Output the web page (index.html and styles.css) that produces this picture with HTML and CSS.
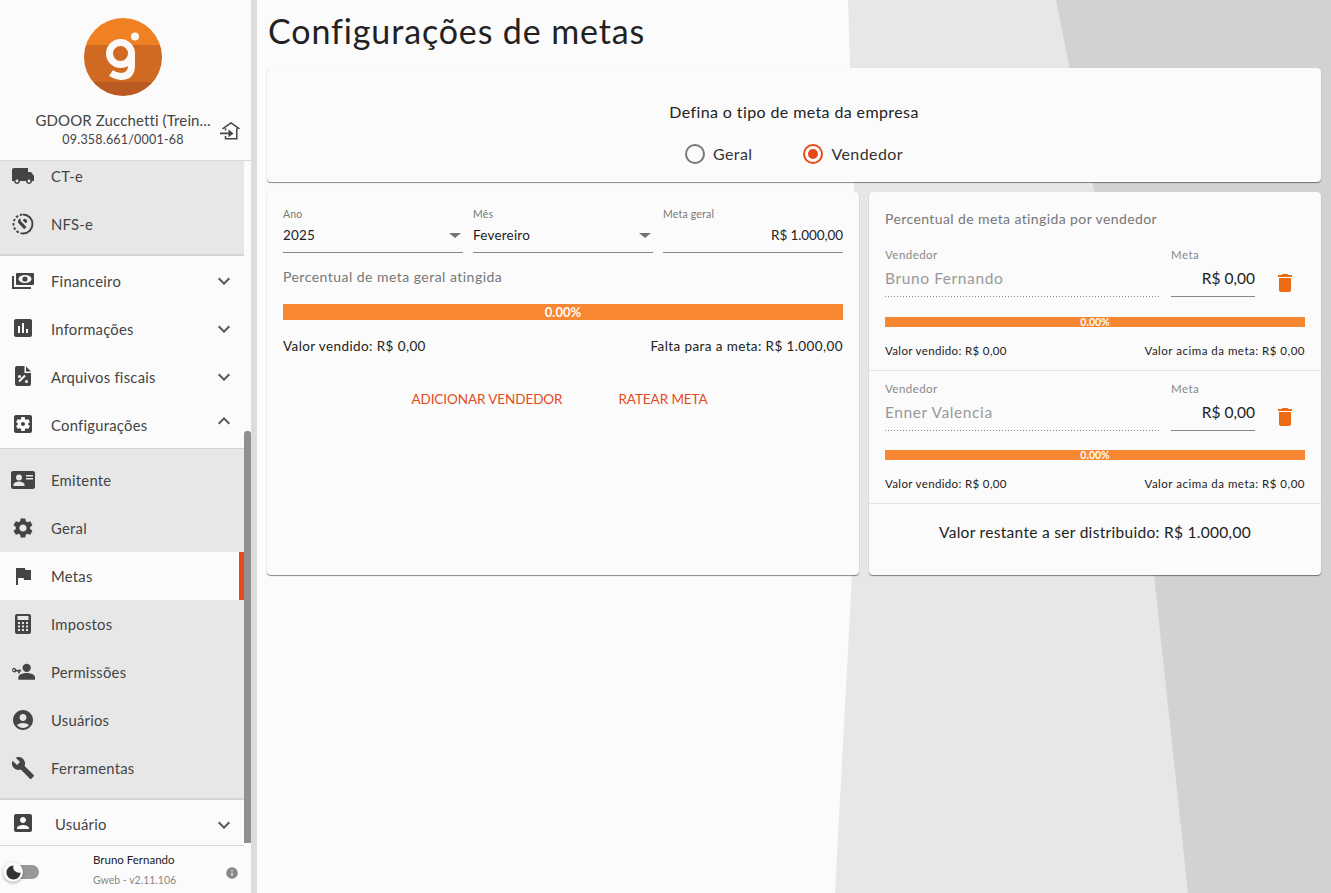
FILE: index.html
```html
<!DOCTYPE html>
<html lang="pt-BR">
<head>
<meta charset="utf-8">
<title>Configurações de metas</title>
<link rel="stylesheet" href="styles.css">
</head>
<body>
<svg class="bg" viewBox="0 0 1331 893" preserveAspectRatio="none" aria-hidden="true">
  <polygon points="848,0 1331,0 1331,893 835,893 852,575 854,190" fill="#e7e7e7"/>
  <polygon points="1056,0 1331,0 1331,893 1188,893 1154,575 1094,190" fill="#d2d2d2"/>
</svg>
<div class="app">
  <aside class="sidebar">
    <div class="brand">
      <svg class="logo" viewBox="0 0 78 78">
        <defs><clipPath id="lc"><circle cx="39" cy="39" r="39"/></clipPath></defs>
        <g clip-path="url(#lc)">
          <rect width="78" height="27" fill="#ef8023"/>
          <rect y="27" width="78" height="37" fill="#d06a22"/>
          <rect y="64" width="78" height="14" fill="#b95a22"/>
        </g>
        <circle cx="36.500" cy="35.500" r="11" fill="none" stroke="#fbf8f5" stroke-width="7"/>
        <circle cx="51" cy="18.600" r="4" fill="#fbf8f5"/>
        <path d="M47.500 36 V47 Q47.500 58.500 37 58.500 Q32 58.500 27 55" fill="none" stroke="#fbf8f5" stroke-width="7"/>
      </svg>
      <div class="brand-row">
        <div class="brand-text">
          <div class="brand-name">GDOOR Zucchetti (Trein...</div>
          <div class="brand-doc">09.358.661/0001-68</div>
        </div>
        <svg class="swap" viewBox="0 0 20 18"><path d="M2.500 6.800 11 1l8.500 5.800M5.500 6.200V8.500M5.500 14V16.800H16.800V6.200" fill="none" stroke="#444" stroke-width="1.500"/><path d="M0 10.600h8.500V7.600L13.500 11.400 8.500 15.200V12.200H0z" fill="#444"/></svg>
      </div>
    </div>
    <div class="nav-wrap">
      <nav class="nav">
        <div class="sub sub-top">
          <a class="item item-cut"><svg class="ic" viewBox="0 0 24 24"><path d="M20 8h-3V4H3c-1.100 0-2 .9-2 2v11h2c0 1.660 1.340 3 3 3s3-1.340 3-3h6c0 1.660 1.340 3 3 3s3-1.340 3-3h2v-5zM6 18.500c-.83 0-1.500-.67-1.500-1.500s.67-1.500 1.500-1.500 1.500.67 1.500 1.500-.67 1.500-1.500 1.500zm12 0c-.83 0-1.500-.67-1.500-1.500s.67-1.500 1.500-1.500 1.500.67 1.500 1.500-.67 1.500-1.500 1.500z"/></svg><span>CT-e</span></a>
          <a class="item"><svg class="ic" viewBox="0 0 24 24"><path d="M12 2.500a9.500 9.500 0 0 1 0 19" fill="none" stroke="#444" stroke-width="1.900"/><path d="M12 21.500a9.500 9.500 0 0 1 0-19" fill="none" stroke="#444" stroke-width="1.900" stroke-dasharray="2.600 1.800"/><path d="M9.200 6.500a3.500 3.500 0 0 0-1.900 4.600l5.900 6.100 2.300-2.200-5.800-6a3 3 0 0 0-.5-2.500z M13.200 6.800l-1.500 1.500 3 3 1.500-1.500a3.200 3.200 0 0 0-3-3z"/></svg><span>NFS-e</span></a>
        </div>
        <a class="item"><svg class="ic" viewBox="0 0 24 24"><rect x="5" y="5" width="18" height="12" rx="1"/><ellipse cx="14" cy="11" rx="6.500" ry="4" fill="#fbfbfb"/><circle cx="14" cy="11" r="2.600"/><path d="M1 8h2v11h17v2H1z"/></svg><span>Financeiro</span><svg class="chev" viewBox="0 0 24 24"><path d="M7.400 8.600 12 13.200l4.600-4.600L18 10l-6 6-6-6z"/></svg></a>
        <a class="item"><svg class="ic" viewBox="0 0 24 24"><path d="M19 3H5c-1.100 0-2 .9-2 2v14c0 1.100.9 2 2 2h14c1.100 0 2-.9 2-2V5c0-1.100-.9-2-2-2zM9 17H7v-7h2v7zm4 0h-2V7h2v10zm4 0h-2v-4h2v4z"/></svg><span>Informações</span><svg class="chev" viewBox="0 0 24 24"><path d="M7.400 8.600 12 13.200l4.600-4.600L18 10l-6 6-6-6z"/></svg></a>
        <a class="item"><svg class="ic" viewBox="0 0 24 24"><path fill-rule="evenodd" d="M13.500 2H6c-1.100 0-2 .9-2 2v16c0 1.100.9 2 2 2h12c1.100 0 2-.9 2-2V9h-6.500zm-.2 8.800 1.400 1.400-6 6-1.400-1.400zM8.500 11a1.500 1.500 0 1 1 0 3 1.500 1.500 0 0 1 0-3zm7 5a1.500 1.500 0 1 1 0 3 1.500 1.500 0 0 1 0-3z"/><path d="M15 2.500 20 7.500h-5z"/></svg><span>Arquivos fiscais</span><svg class="chev" viewBox="0 0 24 24"><path d="M7.400 8.600 12 13.200l4.600-4.600L18 10l-6 6-6-6z"/></svg></a>
        <a class="item"><svg class="ic" viewBox="0 0 24 24"><path fill-rule="evenodd" d="M19 3H5c-1.100 0-2 .9-2 2v14c0 1.100.9 2 2 2h14c1.100 0 2-.9 2-2V5c0-1.100-.9-2-2-2zm-1.750 9c0 .23-.02.46-.05.68l1.480 1.160c.13.110.17.300.08.450l-1.400 2.420c-.09.150-.27.210-.43.150l-1.740-.7c-.36.280-.76.510-1.180.690l-.26 1.850c-.03.170-.18.300-.35.300h-2.800c-.17 0-.32-.13-.35-.29l-.26-1.850c-.43-.18-.82-.41-1.180-.69l-1.740.7c-.16.060-.34 0-.43-.15l-1.400-2.420c-.09-.15-.05-.34.080-.45l1.480-1.160c-.03-.23-.05-.46-.05-.69 0-.23.02-.46.05-.68l-1.480-1.160c-.13-.110-.17-.300-.08-.450l1.400-2.420c.09-.15.27-.21.430-.15l1.740.7c.36-.28.76-.51 1.180-.69l.26-1.850c.03-.17.180-.300.350-.300h2.800c.17 0 .32.130.35.290l.26 1.850c.43.180.82.410 1.180.690l1.740-.7c.16-.06.34 0 .43.150l1.400 2.420c.09.150.05.340-.08.450l-1.480 1.160c.03.230.05.460.05.690zM12 10a2 2 0 1 0 0 4 2 2 0 0 0 0-4z"/></svg><span>Configurações</span><svg class="chev chev-up" viewBox="0 0 24 24"><path d="M7.400 15.400 12 10.800l4.600 4.600L18 14l-6-6-6 6z"/></svg></a>
        <div class="sub">
          <a class="item"><svg class="ic ic-wide" viewBox="0 0 24 18"><path fill-rule="evenodd" d="M22 0H2C.9 0 0 .9 0 2v14c0 1.100.9 2 2 2h20c1.100 0 2-.9 2-2V2c0-1.100-.9-2-2-2zM8 3.500a3 3 0 1 1 0 6 3 3 0 0 1 0-6zM2.500 15v-1.500c0-2 3.700-3 5.500-3s5.500 1 5.500 3V15zM15 4h7v1.500h-7zm0 3h7v1.500h-7z"/></svg><span>Emitente</span></a>
          <a class="item"><svg class="ic" viewBox="0 0 24 24"><path d="M19.140 12.940c.04-.3.060-.61.060-.94 0-.32-.02-.64-.07-.94l2.030-1.580c.18-.14.230-.41.120-.61l-1.920-3.320c-.12-.22-.37-.29-.59-.22l-2.390.96c-.5-.38-1.030-.7-1.620-.94l-.36-2.540c-.04-.24-.24-.41-.48-.41h-3.840c-.24 0-.43.170-.47.410l-.36 2.540c-.59.240-1.130.570-1.620.94l-2.390-.96c-.22-.08-.47 0-.59.220L2.740 8.870c-.12.210-.08.470.12.610l2.030 1.580c-.05.300-.09.630-.09.940s.02.640.07.940l-2.030 1.580c-.18.140-.23.410-.12.610l1.920 3.320c.12.220.37.290.59.220l2.390-.96c.5.380 1.030.7 1.620.94l.36 2.540c.05.240.24.410.48.410h3.840c.24 0 .44-.17.470-.41l.36-2.540c.59-.24 1.130-.56 1.620-.94l2.390.96c.22.080.47 0 .59-.22l1.920-3.320c.12-.22.070-.47-.12-.61l-2.010-1.580zM12 15.600c-1.980 0-3.600-1.620-3.600-3.600s1.620-3.600 3.600-3.600 3.600 1.620 3.600 3.600-1.620 3.600-3.600 3.600z"/></svg><span>Geral</span></a>
          <a class="item item-active"><svg class="ic" viewBox="0 0 24 24"><path d="M14.400 6 14 4H5v17h2v-7h5.600l.4 2h7V6z"/></svg><span>Metas</span></a>
          <a class="item"><svg class="ic" viewBox="0 0 24 24"><path fill-rule="evenodd" d="M18 2H6c-.9 0-2 .9-2 2v16c0 1.100 1.100 2 2 2h12c.9 0 2-.9 2-2V4c0-1.100-1.100-2-2-2zM6.500 4h11v4h-11zM7 10h2v2H7zm4 0h2v2h-2zm4 0h2v2h-2zM7 13.500h2v2H7zm4 0h2v2h-2zm4 0h2v2h-2zM7 17h2v2H7zm4 0h2v2h-2zm4 0h2v2h-2z"/></svg><span>Impostos</span></a>
          <a class="item"><svg class="ic ic-wide" viewBox="0 0 26 18"><circle cx="17" cy="4.500" r="4.500"/><path d="M8 16.500v-2c0-3 6-4.500 9-4.500s9 1.500 9 4.500v3H8z"/><path fill-rule="evenodd" d="M3.200 4.500A2.500 2.500 0 0 1 5.600 6.500H11V8.500H9.500V10.500H7.800V8.500H5.600A2.500 2.500 0 1 1 3.200 4.500zm0 1.500a1 1 0 1 0 0 2 1 1 0 0 0 0-2z"/></svg><span>Permissões</span></a>
          <a class="item"><svg class="ic" viewBox="0 0 24 24"><path d="M12 2C6.480 2 2 6.480 2 12s4.480 10 10 10 10-4.480 10-10S17.520 2 12 2zm0 4c1.930 0 3.500 1.570 3.500 3.500S13.930 13 12 13s-3.500-1.570-3.500-3.500S10.070 6 12 6zm0 14c-2.030 0-4.430-.82-6.140-2.880C7.550 15.800 9.680 15 12 15s4.450.8 6.140 2.120C16.430 19.180 14.030 20 12 20z"/></svg><span>Usuários</span></a>
          <a class="item"><svg class="ic" viewBox="0 0 24 24"><path d="M22.700 19l-9.100-9.100c.9-2.300.4-5-1.500-6.900-2-2-5-2.400-7.400-1.300L9 6 6 9 1.600 4.700C.4 7.100.9 10.100 2.900 12.100c1.900 1.900 4.600 2.400 6.900 1.500l9.100 9.100c.4.400 1 .4 1.400 0l2.300-2.300c.5-.4.500-1.100.1-1.400z"/></svg><span>Ferramentas</span></a>
        </div>
        <a class="item item-user"><svg class="ic" viewBox="0 0 24 24"><path d="M3 5v14c0 1.100.9 2 2 2h14c1.100 0 2-.9 2-2V5c0-1.100-.9-2-2-2H5c-1.100 0-2 .9-2 2zm12 4c0 1.660-1.340 3-3 3s-3-1.340-3-3 1.340-3 3-3 3 1.340 3 3zm-9 8c0-2 4-3.100 6-3.100s6 1.100 6 3.100v1H6v-1z"/></svg><span>Usuário</span><svg class="chev" viewBox="0 0 24 24"><path d="M7.400 8.600 12 13.200l4.600-4.600L18 10l-6 6-6-6z"/></svg></a>
      </nav>
      <div class="scrollbar"><div class="thumb"></div></div>
    </div>
    <div class="foot">
      <div class="toggle"><div class="track"></div><div class="knob"><svg viewBox="0 0 24 24"><path d="M12 2a10 10 0 1 0 10 10 8 8 0 0 1-10-10z" fill="#333"/></svg></div></div>
      <div class="foot-text">
        <div class="foot-name">Bruno Fernando</div>
        <div class="foot-ver">Gweb - v2.11.106</div>
      </div>
      <svg class="info" viewBox="0 0 24 24"><path d="M12 2a10 10 0 1 0 0 20 10 10 0 0 0 0-20zm1 15h-2v-6h2zm0-8h-2V7h2z" fill="#888"/></svg>
    </div>
  </aside>
  <main class="main">
    <h1 class="title">Configurações de metas</h1>
    <section class="card card-type">
      <div class="type-q">Defina o tipo de meta da empresa</div>
      <div class="radios">
        <label class="radio"><span class="dot"></span>Geral</label>
        <label class="radio radio-on"><span class="dot"></span>Vendedor</label>
      </div>
    </section>
    <div class="cols">
      <section class="card col-left">
        <div class="fields">
          <div class="field"><div class="lbl">Ano</div><div class="val">2025<i class="caret"></i></div></div>
          <div class="field"><div class="lbl">Mês</div><div class="val">Fevereiro<i class="caret"></i></div></div>
          <div class="field"><div class="lbl">Meta geral</div><div class="val val-right">R$ 1.000,00</div></div>
        </div>
        <div class="subtitle">Percentual de meta geral atingida</div>
        <div class="bar bar-big">0.00%</div>
        <div class="totals"><span>Valor vendido: R$ 0,00</span><span>Falta para a meta: R$ 1.000,00</span></div>
        <div class="actions"><a class="btn">ADICIONAR VENDEDOR</a><a class="btn">RATEAR META</a></div>
      </section>
      <section class="card col-right">
        <div class="subtitle subtitle-r">Percentual de meta atingida por vendedor</div>
        <div class="seller">
          <div class="seller-row">
            <div class="s-name"><div class="lbl-r">Vendedor</div><div class="s-val">Bruno Fernando</div></div>
            <div class="s-goal"><div class="lbl-r">Meta</div><div class="g-val">R$ 0,00</div></div>
            <svg class="trash" viewBox="0 0 24 24"><path d="M6 19c0 1.100.9 2 2 2h8c1.100 0 2-.9 2-2V7H6zM19 4h-3.500l-1-1h-5l-1 1H5v2h14z"/></svg>
          </div>
          <div class="bar bar-small">0.00%</div>
          <div class="s-totals"><span>Valor vendido: R$ 0,00</span><span>Valor acima da meta: R$ 0,00</span></div>
        </div>
        <div class="seller">
          <div class="seller-row">
            <div class="s-name"><div class="lbl-r">Vendedor</div><div class="s-val">Enner Valencia</div></div>
            <div class="s-goal"><div class="lbl-r">Meta</div><div class="g-val">R$ 0,00</div></div>
            <svg class="trash" viewBox="0 0 24 24"><path d="M6 19c0 1.100.9 2 2 2h8c1.100 0 2-.9 2-2V7H6zM19 4h-3.500l-1-1h-5l-1 1H5v2h14z"/></svg>
          </div>
          <div class="bar bar-small">0.00%</div>
          <div class="s-totals"><span>Valor vendido: R$ 0,00</span><span>Valor acima da meta: R$ 0,00</span></div>
        </div>
        <div class="remain">Valor restante a ser distribuido: R$ 1.000,00</div>
      </section>
    </div>
  </main>
</div>
</body>
</html>
```
FILE: styles.css
```css
* { box-sizing: border-box; }
html, body { margin: 0; height: 893px; overflow: hidden; }
body { background: #fbfbfb; font-family: "Lato", "Noto Sans", sans-serif; color: #222; position: relative; }
.bg { position: absolute; inset: 0; width: 1331px; height: 893px; }
.app { position: relative; display: flex; height: 893px; }

.sidebar { width: 257px; height: 893px; display: flex; flex-direction: column; background: #fbfbfb; border-right: 6px solid #dcdcdc; }
.brand { height: 161px; flex: none; border-bottom: 1px solid #d8d8d8; display: flex; flex-direction: column; align-items: center; padding: 18px 5px 0 0; }
.logo { width: 78px; height: 78px; flex: none; }
.brand-row { position: relative; width: 100%; margin-top: 14px; }
.brand-text { text-align: center; }
.brand-name { font-size: 15px; line-height: 20px; color: #444; letter-spacing: .12px; }
.brand-doc { font-size: 12.500px; line-height: 18px; margin-top: 1px; color: #444; letter-spacing: .2px; }
.swap { position: absolute; right: 6px; top: 12px; width: 20px; height: 18px; }

.nav-wrap { flex: 1; min-height: 0; position: relative; display: flex; }
.nav { width: 244px; flex: none; overflow: hidden; }
.item { height: 48px; display: flex; align-items: center; padding-left: 11px; font-size: 14.800px; color: #444; letter-spacing: .25px; position: relative; background: #fbfbfb; }
.item span { margin-left: 16px; }
.nav > .item span { padding-top: 2px; }
.ic { width: 24px; height: 24px; flex: none; fill: #444; }
.ic-wide { width: 24px; height: 18px; }
.chev { width: 24px; height: 24px; fill: #555; position: absolute; right: 8px; top: 13px; }
.chev-up { top: 9px; }
.sub { background: #e7e7e7; border-bottom: 2px solid #d4d4d4; }
.sub .item { background: transparent; }
.sub-top { height: 95px; overflow: hidden; }
.sub-top .item-cut { margin-top: -9px; }
.sub:not(.sub-top) { border-top: 2px solid #d4d4d4; margin-top: -1px; padding: 7px 0 6px; }
.sub .item.item-active { background: #fbfbfb; border-right: 5px solid #e64a19; }
.item.item-user { height: 46px; border-bottom: 1px solid #d8d8d8; }
.item-user span { margin-left: 20px; }
.scrollbar { width: 7px; flex: none; position: relative; }
.thumb { position: absolute; top: 270px; bottom: 3px; left: 0; right: 0; background: #909090; border-radius: 3px 3px 0 0; }

.foot { height: 47px; flex: none; display: flex; align-items: center; position: relative; padding-left: 93px; }
.foot-name { font-size: 11.500px; line-height: 15px; color: #222; }
.foot-ver { font-size: 10.500px; line-height: 15px; color: #888; margin-top: 6px; }
.toggle { position: absolute; left: 3px; top: 19px; width: 36px; height: 14px; }
.track { position: absolute; left: 8px; right: 0; top: 0; height: 14px; border-radius: 7px; background: #989898; }
.knob { position: absolute; left: 0; top: -3px; width: 20px; height: 20px; border-radius: 50%; background: #fbfbfb; box-shadow: 0 1px 3px rgba(0,0,0,.35); display: flex; align-items: center; justify-content: center; }
.knob svg { width: 17px; height: 17px; }
.info { position: absolute; left: 225px; top: 20px; width: 14px; height: 14px; }

.main { width: 1074px; flex: none; padding: 0 10px; position: relative; }
.title { margin: 0; font-weight: 400; font-size: 34px; line-height: 40px; padding: 11px 0 0 1px; height: 68px; color: #222; letter-spacing: .87px; }
.card { background: #fbfbfb; border-radius: 4px; box-shadow: 0 1px 1px rgba(0,0,0,.45), 0 0 1px rgba(0,0,0,.12); }
.card-type { height: 114px; text-align: center; padding-top: 33px; }
.type-q { font-size: 16px; line-height: 22px; color: #222; letter-spacing: .39px; }
.radios { display: flex; justify-content: center; gap: 51px; margin-top: 20px; }
.radio { display: flex; align-items: center; gap: 8px; font-size: 16px; line-height: 22px; color: #333; letter-spacing: .4px; }
.dot { width: 20px; height: 20px; border: 2px solid #777; border-radius: 50%; display: block; position: relative; }
.radio-on .dot { border-color: #e64a19; }
.radio-on .dot::after { content: ""; position: absolute; left: 3px; top: 3px; width: 10px; height: 10px; border-radius: 50%; background: #e64a19; }

.cols { display: flex; gap: 10px; margin-top: 10px; }
.col-left { width: 592px; height: 383px; padding: 15px 16px 16px; }
.col-right { width: 452px; height: 383px; padding: 18px 16px 0; }
.fields { display: flex; gap: 10px; }
.field { flex: 1; height: 46px; border-bottom: 1px solid #888; }
.lbl { font-size: 10.500px; line-height: 14px; color: #777; letter-spacing: .2px; }
.val { font-size: 13.500px; line-height: 20px; margin-top: 4px; color: #222; display: flex; justify-content: space-between; align-items: center; position: relative; letter-spacing: .2px; }
.val-right { justify-content: flex-end; letter-spacing: -.1px; }
.caret { width: 0; height: 0; border-left: 6px solid transparent; border-right: 6px solid transparent; border-top: 5px solid #757575; margin-right: 2px; }
.subtitle { font-size: 14px; line-height: 18px; color: #777; margin-top: 15px; letter-spacing: .47px; }
.subtitle.subtitle-r { margin: 0; letter-spacing: .4px; }
.bar { background: #f78733; color: #fdfdfd; text-align: center; }
.bar-big { height: 16px; line-height: 16px; font-size: 13px; font-weight: 700; margin-top: 18px; }
.bar-small { height: 10px; line-height: 11px; font-size: 10.500px; font-weight: 700; margin-top: 20px; }
.totals { display: flex; justify-content: space-between; font-size: 13.500px; line-height: 18px; margin-top: 17px; color: #222; letter-spacing: .4px; }
.actions { display: flex; justify-content: center; gap: 56px; margin-top: 35px; padding-right: 7px; }
.btn { font-size: 13.500px; line-height: 18px; color: #e64a19; letter-spacing: -.08px; }

.seller { border-bottom: 1px solid #e4e4e4; margin: 0 -16px; padding: 20px 16px 0; height: 143px; }
.seller + .seller { padding-top: 11px; height: 133px; }
.seller + .seller .bar-small { margin-top: 19px; }
.seller-row { display: flex; align-items: flex-start; }
.s-name { width: 274px; height: 49px; background: repeating-linear-gradient(to right, #888 0 1px, transparent 1px 3px) left bottom / 100% 1px no-repeat; }
.s-goal { width: 84px; height: 49px; border-bottom: 1px solid #888; margin-left: 12px; }
.lbl-r { font-size: 11.500px; line-height: 14px; color: #888; letter-spacing: .45px; }
.s-val { font-size: 15.500px; line-height: 22px; color: #999; margin-top: 5px; letter-spacing: .6px; }
.g-val { font-size: 15.500px; line-height: 22px; color: #222; margin-top: 5px; text-align: right; }
.trash { width: 24px; height: 24px; fill: #ec6a12; margin: 23px 0 0 18px; flex: none; }
.s-totals { display: flex; justify-content: space-between; font-size: 11.500px; line-height: 14px; margin-top: 17px; color: #222; letter-spacing: .35px; }
.s-totals span:last-child { letter-spacing: .5px; }
.remain { text-align: center; font-size: 15.500px; line-height: 20px; margin-top: 18px; color: #222; letter-spacing: .3px; }
```
